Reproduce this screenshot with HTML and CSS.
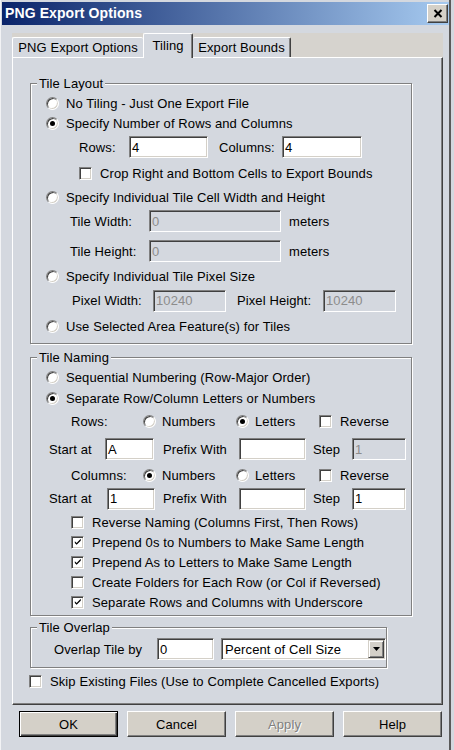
FILE: index.html
```html
<!DOCTYPE html>
<html>
<head>
<meta charset="utf-8">
<title>PNG Export Options</title>
<link rel="stylesheet" href="styles.css">
</head>
<body>
<div class="window">
  <div class="titlebar">
    <span class="title">PNG Export Options</span>
    <div class="close-btn">
      <svg width="10" height="9" viewBox="0 0 10 9"><path d="M1.5 1 L8.5 8 M8.5 1 L1.5 8" stroke="#000" stroke-width="2" fill="none"/></svg>
    </div>
  </div>

  <div class="tabs">
    <div class="tab t1">PNG Export Options</div>
    <div class="tab active">Tiling</div>
    <div class="tab t3">Export Bounds</div>
  </div>

  <div class="panel">
    <div class="group g-layout">
      <span class="legend">Tile Layout</span>
      <div class="row r-radio h20"><span class="rd"></span><span class="lbl">No Tiling - Just One Export File</span></div>
      <div class="row r-radio h20"><span class="rd on"></span><span class="lbl">Specify Number of Rows and Columns</span></div>
      <div class="row r-rows">
        <span class="w-rows">Rows:</span>
        <span class="input w79">4</span>
        <span class="w-cols">Columns:</span>
        <span class="input w80">4</span>
      </div>
      <div class="row r-crop"><span class="cb"></span><span class="lbl">Crop Right and Bottom Cells to Export Bounds</span></div>
      <div class="row r-radio h24"><span class="rd"></span><span class="lbl">Specify Individual Tile Cell Width and Height</span></div>
      <div class="row r-tile">
        <span class="w-tile">Tile Width:</span>
        <span class="input dis w132">0</span>
        <span class="unit">meters</span>
      </div>
      <div class="row r-tile gap6">
        <span class="w-tile">Tile Height:</span>
        <span class="input dis w132">0</span>
        <span class="unit">meters</span>
      </div>
      <div class="row r-radio h26"><span class="rd"></span><span class="lbl">Specify Individual Tile Pixel Size</span></div>
      <div class="row r-pixel">
        <span class="w-pw">Pixel Width:</span>
        <span class="input dis w73">10240</span>
        <span class="w-ph">Pixel Height:</span>
        <span class="input dis w73">10240</span>
      </div>
      <div class="row r-radio h28"><span class="rd"></span><span class="lbl">Use Selected Area Feature(s) for Tiles</span></div>
    </div>

    <div class="group g-naming">
      <span class="legend">Tile Naming</span>
      <div class="row r-radio h20"><span class="rd"></span><span class="lbl">Sequential Numbering (Row-Major Order)</span></div>
      <div class="row r-radio h22"><span class="rd on"></span><span class="lbl">Separate Row/Column Letters or Numbers</span></div>
      <div class="row r-opts h24">
        <span class="w-opt">Rows:</span>
        <span class="opt w93"><span class="rd"></span><span class="olbl">Numbers</span></span>
        <span class="opt w83"><span class="rd on"></span><span class="olbl">Letters</span></span>
        <span class="opt"><span class="cb"></span><span class="lbl">Reverse</span></span>
      </div>
      <div class="row r-start h32">
        <span class="w-start">Start at</span>
        <span class="input w49">A</span>
        <span class="w-prefix m9">Prefix With</span>
        <span class="input w67"></span>
        <span class="w-step">Step</span>
        <span class="input dis w54">1</span>
      </div>
      <div class="row r-opts h20">
        <span class="w-opt">Columns:</span>
        <span class="opt w93"><span class="rd on"></span><span class="olbl">Numbers</span></span>
        <span class="opt w83"><span class="rd"></span><span class="olbl">Letters</span></span>
        <span class="opt"><span class="cb"></span><span class="lbl">Reverse</span></span>
      </div>
      <div class="row r-start h27">
        <span class="w-start2">Start at</span>
        <span class="input w48">1</span>
        <span class="w-prefix m8">Prefix With</span>
        <span class="input w67"></span>
        <span class="w-step">Step</span>
        <span class="input w54">1</span>
      </div>
      <div class="row r-check"><span class="cb"></span><span class="lbl">Reverse Naming (Columns First, Then Rows)</span></div>
      <div class="row r-check"><span class="cb"><svg width="11" height="11" viewBox="0 0 11 11"><path d="M2 4 L4 6 L8.5 1.5 L8.5 3.5 L4 8 L2 6 Z" fill="#000"/></svg></span><span class="lbl">Prepend 0s to Numbers to Make Same Length</span></div>
      <div class="row r-check"><span class="cb"><svg width="11" height="11" viewBox="0 0 11 11"><path d="M2 4 L4 6 L8.5 1.5 L8.5 3.5 L4 8 L2 6 Z" fill="#000"/></svg></span><span class="lbl">Prepend As to Letters to Make Same Length</span></div>
      <div class="row r-check"><span class="cb"></span><span class="lbl">Create Folders for Each Row (or Col if Reversed)</span></div>
      <div class="row r-check"><span class="cb"><svg width="11" height="11" viewBox="0 0 11 11"><path d="M2 4 L4 6 L8.5 1.5 L8.5 3.5 L4 8 L2 6 Z" fill="#000"/></svg></span><span class="lbl">Separate Rows and Columns with Underscore</span></div>
    </div>

    <div class="group g-overlap">
      <span class="legend">Tile Overlap</span>
      <div class="row r-overlap">
        <span class="w-ov">Overlap Tile by</span>
        <span class="input w57">0</span>
        <span class="select">
          <span>Percent of Cell Size</span>
          <span class="drop"><svg width="7" height="4" viewBox="0 0 7 4"><path d="M0 0 H7 L3.5 4 Z" fill="#000"/></svg></span>
        </span>
      </div>
    </div>

    <div class="row r-skip"><span class="cb"></span><span class="lbl">Skip Existing Files (Use to Complete Cancelled Exports)</span></div>
  </div>

  <div class="buttons">
    <div class="btn default">OK</div>
    <div class="btn">Cancel</div>
    <div class="btn disabled">Apply</div>
    <div class="btn">Help</div>
  </div>
</div>
</body>
</html>
```

FILE: styles.css
```css
* { box-sizing: border-box; }
html, body { margin: 0; padding: 0; }
body {
  background: #d4d8df;
  font-family: "Liberation Sans", Arial, sans-serif;
  font-size: 13px;
  line-height: 15px;
  letter-spacing: 0.1px;
  color: #000;
  width: 454px;
  height: 750px;
  overflow: hidden;
}
.window {
  width: 451px;
  height: 750px;
  border-left: 1px solid #f2f3f5;
  padding-left: 1px;
  border-right: 2px solid #5a5a5a;
  display: flex;
  flex-direction: column;
}
.titlebar {
  margin-top: 2px;
  height: 23px;
  background: linear-gradient(to right, #0a246a, #a6caf0);
  display: flex;
  align-items: center;
  justify-content: space-between;
  padding-left: 3px;
  padding-right: 1px;
}
.title { color: #fff; font-weight: bold; font-size: 14px; letter-spacing: 0.1px; }
.close-btn {
  width: 21px;
  height: 19px;
  background: #d4d0c8;
  border: 1px solid;
  border-color: #fff #404040 #404040 #fff;
  box-shadow: inset -1px -1px #808080;
  display: flex;
  align-items: center;
  justify-content: center;
}

.tabs {
  margin: 8px 0 0 10px;
  width: 431px;
  height: 24px;
  background: #d6d3ce;
  display: flex;
  align-items: flex-end;
  position: relative;
  z-index: 1;
}
.tab {
  height: 20px;
  background: #d4d8df;
  border-top: 1px solid #fff;
  border-left: 1px solid #fff;
  border-right: 1px solid #808080;
  border-radius: 2px 2px 0 0;
  display: flex;
  align-items: center;
  justify-content: center;
}
.t1 { width: 131px; border-right: none; }
.t3 { width: 98px; border-left: none; border-right: 1px solid #404040; box-shadow: inset -1px 0 #808080; }
.tab.active {
  width: 50px;
  height: 25px;
  margin-bottom: -1px;
  border-right: 1px solid #404040;
  box-shadow: inset -1px 0 #808080;
  padding-bottom: 2px;
}

.panel {
  margin-left: 10px;
  width: 431px;
  height: 648px;
  background: #d4d8df;
  border-top: 1px solid #fff;
  border-left: 1px solid #fff;
  border-right: 1px solid #404040;
  border-bottom: 1px solid #404040;
  box-shadow: inset -1px -1px #808080;
  padding: 25px 0 0 17px;
  display: flex;
  flex-direction: column;
}

.group {
  position: relative;
  width: 382px;
  border: 1px solid #808080;
  box-shadow: inset 1px 1px #fff, 1px 1px #fff;
  padding-top: 9px;
  flex-shrink: 0;
}
.g-layout { height: 261px; }
.g-naming { height: 259px; margin-top: 13px; }
.g-overlap { width: 357px; height: 41px; margin-top: 11px; padding-top: 6px; }
.legend {
  position: absolute;
  top: -8px;
  left: 6px;
  padding: 0 2px;
  background: #d4d8df;
  line-height: 15px;
}

.row { display: flex; align-items: center; white-space: nowrap; flex-shrink: 0; }
.r-radio { padding-left: 15px; }
.r-radio .lbl { margin-left: 7px; }
.h20 { height: 20px; }
.h22 { height: 22px; }
.h24 { height: 24px; }
.h26 { height: 26px; }
.h27 { height: 27px; }
.h28 { height: 28px; }
.h32 { height: 32px; }

.r-rows { height: 28px; padding-left: 48px; }
.w-rows { width: 50px; }
.w-cols { width: 63px; margin-left: 11px; }
.r-crop { height: 24px; padding-left: 48px; }
.lbl { margin-left: 8px; }
.r-tile { height: 24px; padding-left: 39px; }
.gap6 { margin-top: 6px; }
.w-tile { width: 79px; }
.unit { margin-left: 8px; }
.r-pixel { height: 23px; padding-left: 41px; }
.w-pw { width: 81px; }
.w-ph { width: 86px; margin-left: 11px; }

.r-opts { padding-left: 40px; }
.w-opt { width: 72px; }
.opt { display: flex; align-items: center; }
.olbl { margin-left: 6px; }
.w93 { width: 93px; }
.w83 { width: 83px; }
.r-start { padding-left: 18px; }
.w-start { width: 56px; }
.w-start2 { width: 58px; }
.w-prefix { width: 76px; }
.m9 { margin-left: 9px; }
.m8 { margin-left: 8px; }
.w-step { width: 39px; margin-left: 7px; }
.r-check { height: 20px; padding-left: 40px; }

.r-overlap { height: 30px; padding-left: 23px; }
.w-ov { width: 103px; }
.r-skip { height: 20px; margin-top: 3px; margin-left: -1px; }

.input {
  height: 22px;
  background: #fff;
  border: 1px solid;
  border-color: #808080 #fff #fff #808080;
  box-shadow: inset 1px 1px #404040, inset -1px -1px #d4d0c8;
  padding-left: 2px;
  display: flex;
  align-items: center;
  flex-shrink: 0;
}
.input.dis {
  background: #d4d8df;
  color: #8c8c8c;
  box-shadow: inset 1px 1px #404040, inset -1px -1px #d4d8df;
}
.w48 { width: 48px; }
.w49 { width: 49px; }
.w54 { width: 54px; }
.w57 { width: 57px; }
.w67 { width: 67px; }
.w73 { width: 73px; }
.w79 { width: 79px; }
.w80 { width: 80px; }
.w132 { width: 132px; }

.select {
  width: 165px;
  height: 22px;
  margin-left: 7px;
  background: #fff;
  border: 1px solid;
  border-color: #808080 #fff #fff #808080;
  box-shadow: inset 1px 1px #404040, inset -1px -1px #d4d0c8;
  display: flex;
  align-items: center;
  justify-content: space-between;
  padding: 0 1px 0 3px;
}
.drop {
  width: 16px;
  height: 18px;
  background: #d4d0c8;
  border: 1px solid;
  border-color: #d4d0c8 #404040 #404040 #d4d0c8;
  box-shadow: inset 1px 1px #fff, inset -1px -1px #808080;
  display: flex;
  align-items: center;
  justify-content: center;
}

.cb {
  width: 13px;
  height: 13px;
  flex-shrink: 0;
  background: #fff;
  border: 1px solid;
  border-color: #808080 #fff #fff #808080;
  box-shadow: inset 1px 1px #404040, inset -1px -1px #d4d0c8;
  display: flex;
  align-items: center;
  justify-content: center;
}
.cb svg { display: block; margin: 1px 0 0 1px; }

.rd {
  width: 13px;
  height: 13px;
  flex-shrink: 0;
  border-radius: 50%;
  background: #fff;
  border: 1px solid;
  border-color: #808080 #fff #fff #808080;
  box-shadow: inset 1px 1px #404040, inset -1px -1px #d4d0c8;
  display: flex;
  align-items: center;
  justify-content: center;
}
.rd.on::after {
  content: "";
  width: 5px;
  height: 5px;
  border-radius: 50%;
  background: #000;
}

.buttons {
  display: flex;
  gap: 9px;
  margin: 6px 0 0 17px;
}
.btn {
  width: 99px;
  height: 26px;
  background: #d4d0c8;
  border: 1px solid;
  border-color: #fff #404040 #404040 #fff;
  box-shadow: inset -1px -1px #808080;
  display: flex;
  align-items: center;
  justify-content: center;
}
.btn.default {
  border: 1px solid #000;
  box-shadow: inset 1px 1px #fff, inset -1px -1px #404040, inset -2px -2px #808080;
}
.btn.disabled { color: #808080; text-shadow: 1px 1px #fff; }
```
